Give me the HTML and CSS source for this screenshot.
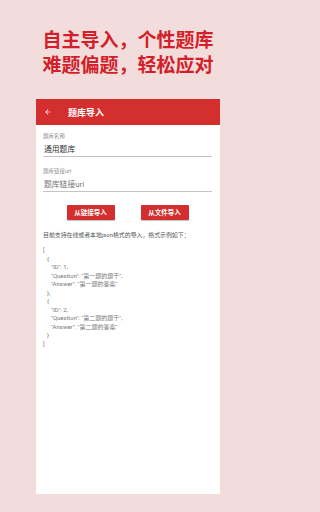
FILE: index.html
```html
<!DOCTYPE html>
<html lang="zh-CN">
<head>
<meta charset="utf-8">
<title>题库导入</title>
<link rel="stylesheet" href="styles.css">
</head>
<body>
<div class="headline">
  <div>自主导入，个性题库</div>
  <div>难题偏题，轻松应对</div>
</div>
<div class="phone">
  <div class="appbar">
    <svg class="back" viewBox="0 0 24 24" width="8" height="8"><path fill="#fff" d="M20 11H7.830l5.59-5.59L12 4l-8 8 8 8 1.41-1.41L7.83 13H20v-2z"/></svg>
    <span class="title">题库导入</span>
  </div>
  <div class="content">
    <div class="field">
      <div class="label">题库名称</div>
      <div class="input">通用题库</div>
    </div>
    <div class="field second">
      <div class="label">题库链接url</div>
      <div class="input hint">题库链接url</div>
    </div>
    <div class="buttons">
      <div class="btn">从链接导入</div>
      <div class="btn">从文件导入</div>
    </div>
    <div class="desc">目前支持在线或者本地json格式的导入，格式示例如下：</div>
    <div class="code">
      <div>[</div>
      <div class="i1">{</div>
      <div class="i2">"ID": 1,</div>
      <div class="i2">"Question": "第一题的题干",</div>
      <div class="i2">"Answer": "第一题的答案"</div>
      <div class="i1">},</div>
      <div class="i1">{</div>
      <div class="i2">"ID": 2,</div>
      <div class="i2">"Question": "第二题的题干",</div>
      <div class="i2">"Answer": "第二题的答案"</div>
      <div class="i1">}</div>
      <div>]</div>
    </div>
  </div>
</div>
</body>
</html>
```
FILE: styles.css
```css
html, body {
  margin: 0;
  padding: 0;
  background: #f2dcdc;
}
body {
  width: 256px;
  height: 512px;
  overflow: hidden;
  font-family: "Roboto", "Noto Sans CJK SC", sans-serif;
}
.headline {
  padding-top: 26px;
  text-align: center;
  color: #d21f29;
  font-family: "Noto Sans CJK SC", sans-serif;
  font-weight: bold;
  font-size: 19px;
  line-height: 25px;
}
.phone {
  margin: 23px auto 0;
  width: 184px;
  height: 395px;
  background: #fff;
}
.appbar {
  height: 26px;
  background: #d32f2f;
  display: flex;
  align-items: center;
  padding-left: 8px;
}
.back {
  display: block;
}
.title {
  margin-left: 16px;
  color: #fff;
  font-family: "Noto Sans CJK SC", sans-serif;
  font-weight: bold;
  font-size: 9px;
}
.content {
  padding: 7px 8px 0 7px;
}
.field .label {
  font-size: 5.5px;
  line-height: 8px;
  color: #8a8a8a;
}
.field .input {
  margin-top: 4px;
  font-size: 7.8px;
  line-height: 12px;
  color: #333;
  padding-left: 1px;
  border-bottom: 1px solid #c4c4c4;
}
.field .input.hint {
  color: #777;
}
.field.second {
  margin-top: 10px;
}
.buttons {
  margin-top: 13px;
  display: flex;
  justify-content: center;
  gap: 26px;
}
.btn {
  width: 48px;
  height: 15px;
  background: #d32f2f;
  color: #fff;
  font-family: "Noto Sans CJK SC", sans-serif;
  font-weight: bold;
  font-size: 6.5px;
  line-height: 15px;
  text-align: center;
  border-radius: 1px;
  box-shadow: 0 1px 1px rgba(0,0,0,0.25);
}
.desc {
  margin-top: 11px;
  font-size: 5.9px;
  line-height: 9px;
  color: #555;
  white-space: nowrap;
}
.code {
  margin-top: 6px;
  font-size: 6px;
  line-height: 8.5px;
  color: #777;
}
.code .i1 {
  padding-left: 4px;
}
.code .i2 {
  padding-left: 8px;
}
```
